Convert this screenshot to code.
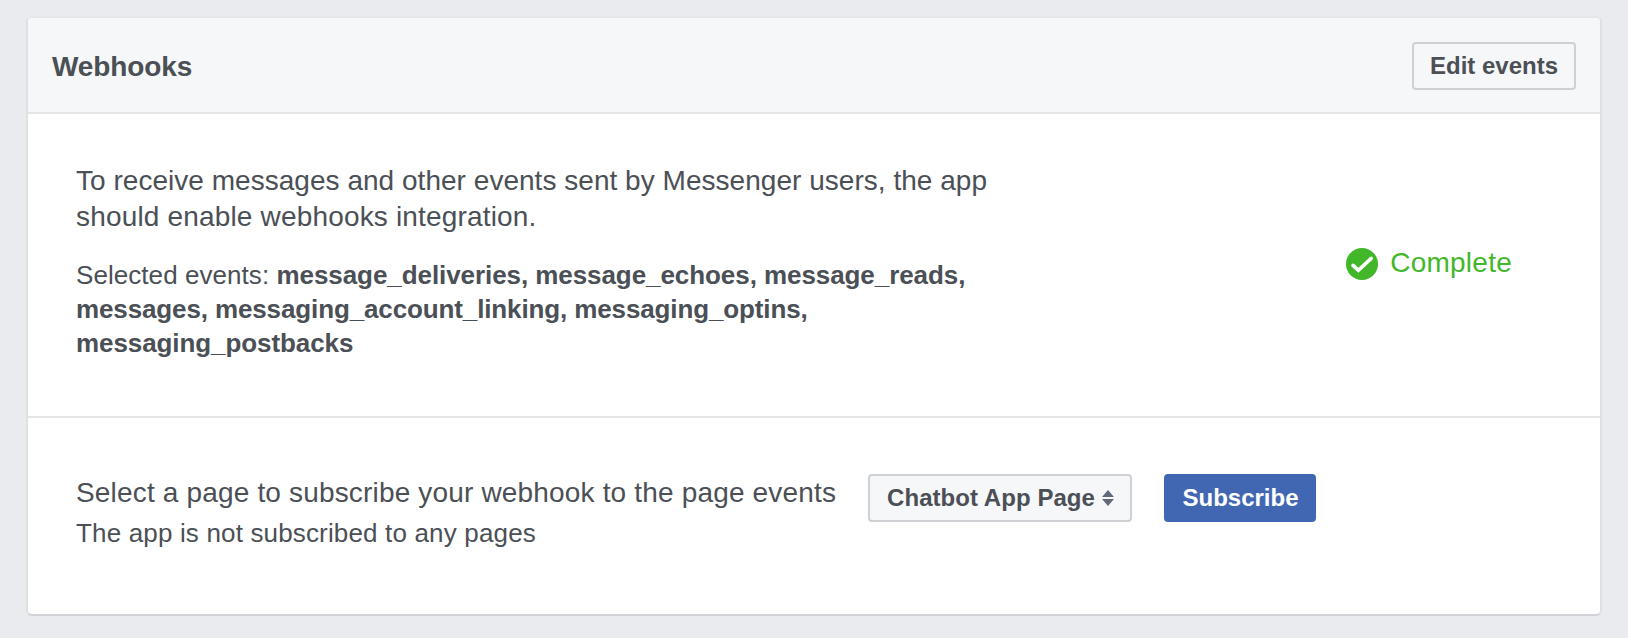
<script>
  const eventLines = [
    ['message_deliveries', 'message_echoes', 'message_reads'],
    ['messages', 'messaging_account_linking', 'messaging_optins'],
    ['messaging_postbacks']
  ];
  const lineText = (line, i) => line.join(', ') + (i < eventLines.length - 1 ? ',' : '');
</script>

<main>
  <section class="card">
    <header>
      <h2>Webhooks</h2>
      <button class="edit">Edit events</button>
    </header>

    <div class="row integration">
      <div class="description">
        <p class="lead">
          <span class="line first">To receive messages and other events sent by Messenger users, the app</span>
          <span class="line">should enable webhooks integration.</span>
        </p>
        <div class="small events">
          <div class="line"><span class="label">Selected events:&nbsp;</span><b class="e0">{lineText(eventLines[0], 0)}</b></div>
          <b class="line e1">{lineText(eventLines[1], 1)}</b>
          <b class="line e2">{lineText(eventLines[2], 2)}</b>
        </div>
      </div>
      <div class="status">
        <svg width="32" height="32" viewBox="0 0 32 32" aria-hidden="true">
          <circle cx="16" cy="16" r="16" fill="#42b72a" />
          <path d="M7 17.4 12.4 22.4 25.2 10.4" fill="none" stroke="#fff" stroke-width="3.6" stroke-linecap="round" stroke-linejoin="miter" />
        </svg>
        <span>Complete</span>
      </div>
    </div>

    <div class="row subscription">
      <div class="prompt">
        <p class="lead">Select a page to subscribe your webhook to the page events</p>
        <p class="small app-text">The app is not subscribed to any pages</p>
      </div>
      <button class="picker">
        <span>Chatbot App Page</span>
        <svg width="12" height="16" viewBox="0 0 12 16" aria-hidden="true">
          <path d="M6 0 12 7H0ZM0 9H12L6 16Z" fill="#606a7b" />
        </svg>
      </button>
      <button class="primary">Subscribe</button>
    </div>
  </section>
</main>

<style>
  :global(body) {
    margin: 0;
    background: #e9ebee;
  }
  main {
    box-sizing: border-box;
    height: 638px;
    padding: 16px 26px 22px;
    color: #4b4f56;
    font-family: "Liberation Sans", Arial, sans-serif;
  }
  .card {
    box-sizing: border-box;
    height: 600px;
    border: 2px solid;
    border-color: #e5e6e9 #dfe0e4 #d0d1d5;
    border-radius: 6px;
    background: #fff;
    overflow: hidden;
  }
  header {
    box-sizing: border-box;
    height: 96px;
    padding: 2px 24px 0;
    display: flex;
    align-items: center;
    justify-content: space-between;
    background: #f6f7f9;
    border-bottom: 2px solid #e5e5e5;
  }
  h2 {
    margin: 2px 0 0;
    font-size: 28px;
    line-height: 36px;
    letter-spacing: -0.12px;
  }
  p {
    margin: 0;
  }
  button {
    box-sizing: border-box;
    height: 48px;
    margin: 0;
    padding: 0;
    display: flex;
    align-items: center;
    justify-content: center;
    border: 2px solid #ced0d4;
    border-radius: 4px;
    background: #f6f7f9;
    color: #4b4f56;
    font: bold 24px/28px "Liberation Sans", Arial, sans-serif;
    white-space: nowrap;
  }
  .edit {
    width: 164px;
  }
  .row {
    display: flex;
    box-sizing: border-box;
  }
  .integration {
    height: 304px;
    padding: 49px 88px 0 48px;
    justify-content: space-between;
    border-bottom: 2px solid #e5e5e5;
  }
  .description {
    width: 930px;
    display: flex;
    flex-direction: column;
    gap: 23px;
    white-space: nowrap;
  }
  .line {
    display: block;
  }
  .lead {
    font-size: 28px;
    line-height: 36px;
    letter-spacing: 0.17px;
  }
  .first {
    letter-spacing: 0.03px;
  }
  .small {
    font-size: 26px;
    line-height: 34px;
  }
  .label {
    letter-spacing: 0.06px;
  }
  .e0 {
    letter-spacing: -0.07px;
  }
  .e1 {
    letter-spacing: -0.125px;
  }
  .e2 {
    letter-spacing: -0.08px;
  }
  .app-text {
    letter-spacing: 0.16px;
  }
  .status {
    height: 36px;
    margin-top: 83px;
    display: flex;
    align-items: center;
    gap: 12px;
    color: #42b72a;
    font-size: 28px;
    line-height: 36px;
    letter-spacing: 0.25px;
  }
  .status span {
    margin-top: -2px;
  }
  .subscription {
    padding: 56px 48px 0;
    gap: 32px;
  }
  .prompt {
    width: 760px;
    padding-top: 1px;
    display: flex;
    flex-direction: column;
    gap: 5px;
    white-space: nowrap;
  }
  .picker {
    width: 264px;
    padding-left: 1px;
    gap: 7px;
    letter-spacing: 0.05px;
  }
  .picker svg {
    margin-top: -1px;
  }
  .primary {
    width: 152px;
    padding-left: 1px;
    border-color: #4267b2;
    background: #4267b2;
    color: #fff;
  }
</style>
